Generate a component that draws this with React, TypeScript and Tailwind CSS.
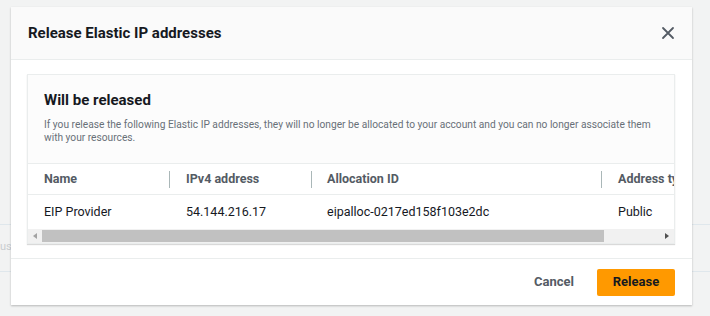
import React from "react";

export default function App() {
  const font = { fontFamily: 'Roboto, "Open Sans", sans-serif' };
  return (
    <div className="relative w-[710px] h-[316px] bg-[#f2f3f3] overflow-hidden" style={font}>
      {/* background page content under overlay */}
      <div className="flex flex-col">
        <div className="h-[224px]" />
        <div className="h-px bg-[#dfe7ec]" />
        <div className="h-[14px]" />
        <div className="h-[16px] text-[11px] text-[#c9cdd0] leading-[16px]">us</div>
        <div className="h-[16px]" />
        <div className="h-px bg-[#dfe7ec]" />
      </div>

      {/* modal */}
      <div className="absolute left-[11px] top-[7px] w-[681px] h-[298px] bg-white shadow-[0_1px_2px_rgba(0,0,0,0.25)] flex flex-col">
        <div className="h-[53px] bg-[#fafafa] border-b border-[#eaeded] flex items-center justify-between pl-[17px] pr-[15px]">
          <div className="text-[15px] font-bold text-[#16191f]">Release Elastic IP addresses</div>
          <svg width="14" height="14" viewBox="0 0 14 14" className="mr-[2px]">
            <path d="M2 2 L12 12 M12 2 L2 12" stroke="#545b64" strokeWidth="1.8" strokeLinecap="round" />
          </svg>
        </div>

        <div className="flex-1 px-[16px] pt-[14px] pr-[17px]">
          <div className="border border-[#eaeded] shadow-[0_1px_1px_rgba(0,0,0,0.15)] bg-white">
            <div className="bg-[#fcfcfc] px-[16px] pt-[15px] pb-[19px] border-b border-[#eaeded]">
              <div className="text-[15px] font-bold text-[#16191f] leading-[20px]">Will be released</div>
              <div className="mt-[8px] text-[10.2px] text-[#687078] leading-[13px]">
                If you release the following Elastic IP addresses, they will no longer be allocated to your account and you can no longer associate them with your resources.
              </div>
            </div>
            <div className="overflow-hidden">
              <div className="w-[760px]">
                <div className="flex h-[31px] items-center border-b border-[#eaeded] text-[12.5px] font-bold text-[#545b64]">
                  <div className="w-[141px] pl-[16px]">Name</div>
                  <div className="w-[142px] flex items-center">
                    <div className="w-px h-[17px] bg-[#aab7b8] mr-[16px]" />
                    IPv4 address
                  </div>
                  <div className="w-[290px] flex items-center">
                    <div className="w-px h-[17px] bg-[#aab7b8] mr-[15px]" />
                    Allocation ID
                  </div>
                  <div className="flex items-center whitespace-nowrap">
                    <div className="w-px h-[17px] bg-[#aab7b8] mr-[16px]" />
                    Address type
                  </div>
                </div>
                <div className="flex h-[34px] items-center text-[12.5px] text-[#16191f]">
                  <div className="w-[141px] pl-[16px]">EIP Provider</div>
                  <div className="w-[142px] pl-[17px]">54.144.216.17</div>
                  <div className="w-[290px] pl-[16px]">eipalloc-0217ed158f103e2dc</div>
                  <div className="pl-[17px]">Public</div>
                </div>
              </div>
            </div>
            {/* horizontal scrollbar */}
            <div className="h-[14px] bg-[#f1f1f1] flex items-center">
              <div className="w-[14px] flex justify-center">
                <svg width="4" height="6" viewBox="0 0 4 6"><path d="M4 0 L0 3 L4 6 Z" fill="#a3a3a3" /></svg>
              </div>
              <div className="w-[562px] h-[12px] bg-[#c1c1c1]" />
              <div className="flex-1" />
              <div className="w-[14px] flex justify-center">
                <svg width="4" height="6" viewBox="0 0 4 6"><path d="M0 0 L4 3 L0 6 Z" fill="#505050" /></svg>
              </div>
            </div>
          </div>
        </div>

        <div className="h-[47px] border-t border-[#eaeded] flex items-center justify-end pr-[17px] gap-[23px]">
          <div className="text-[13px] font-bold text-[#545b64]">Cancel</div>
          <div className="w-[78px] h-[27px] bg-[#ff9900] rounded-[2px] flex items-center justify-center text-[13px] font-bold text-[#16191f]">
            Release
          </div>
        </div>
      </div>
    </div>
  );
}
